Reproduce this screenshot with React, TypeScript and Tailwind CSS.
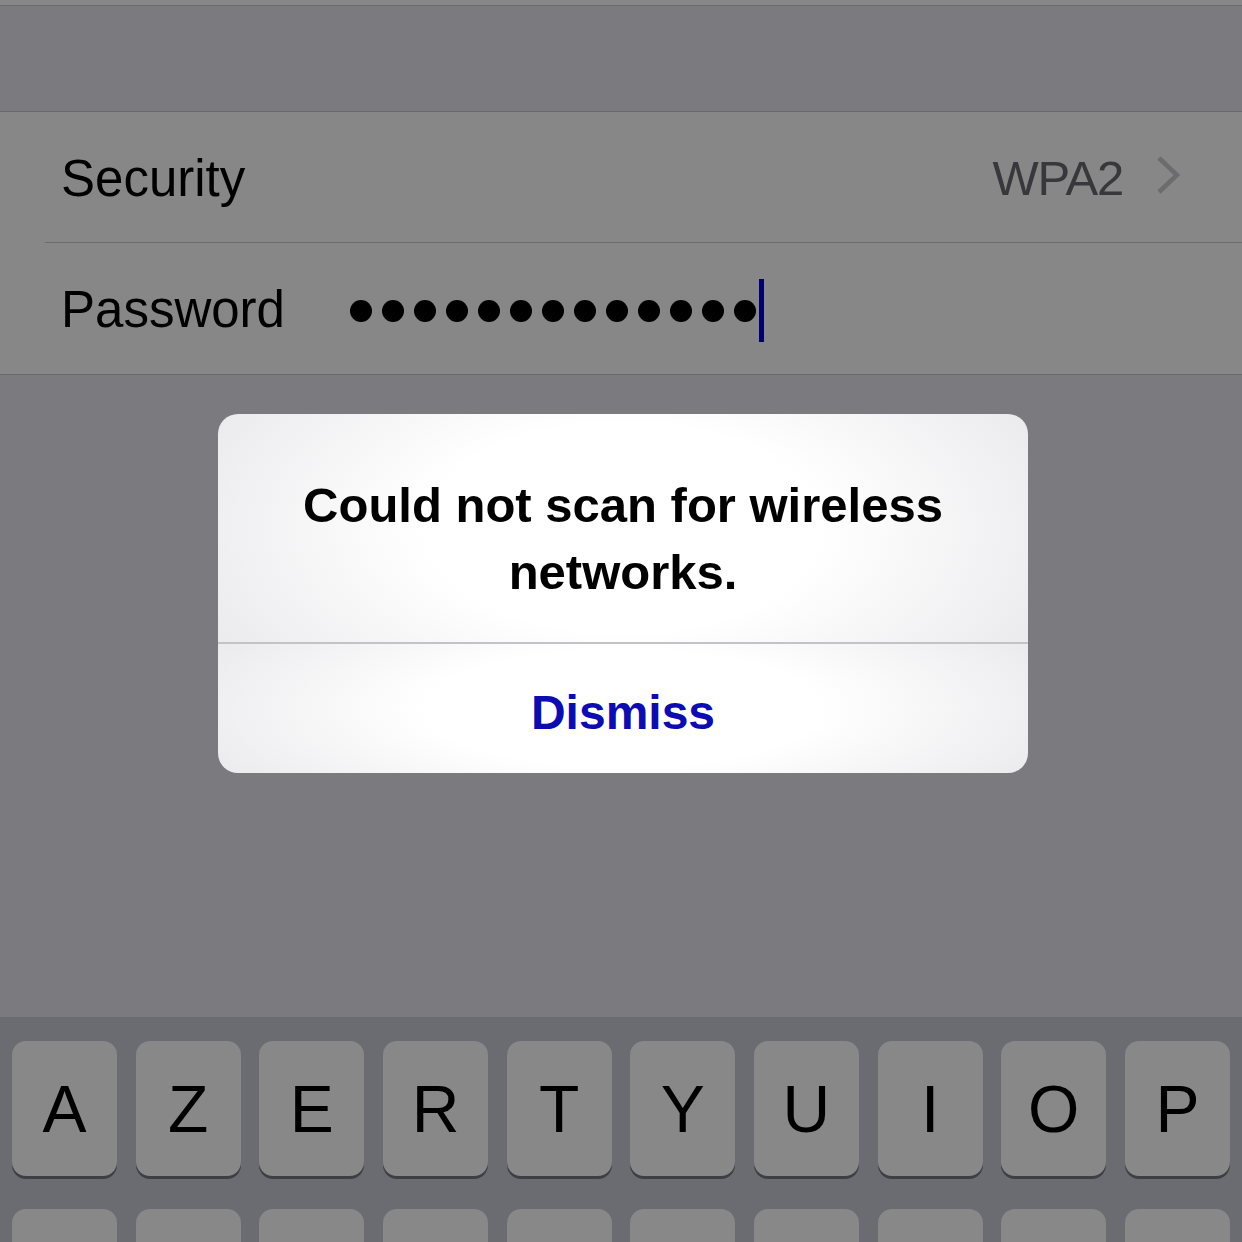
const keys = ['A', 'Z', 'E', 'R', 'T', 'Y', 'U', 'I', 'O', 'P']
const font = { fontFamily: '"Liberation Sans", Arial, sans-serif' }

function Key({ label }: { label: string }) {
  return (
    <div className="w-[105px] h-[135px] rounded-[14px] bg-[#888888] shadow-[0_3px_0_#3e3f43] flex items-center justify-center text-[66px] text-black leading-none">
      {label}
    </div>
  )
}

export default function App() {
  return (
    <div className="w-[1242px] h-[1242px] overflow-hidden bg-[#7b7a7f] flex flex-col" style={font}>
      <div className="h-[6px] bg-[#878689] border-b border-[#6c6b70]" />
      <div className="h-[106px] border-b border-[#69686d]" />

      <div className="bg-[#878787] border-b border-[#6a696e]">
        <div className="h-[130px] flex items-center pt-[4px] pl-[61px] pr-[60px]">
          <span className="text-[51px] text-black">Security</span>
          <span className="ml-auto text-[49px] text-[#38383c] tracking-[-1.2px]">WPA2</span>
          <svg width="26" height="40" viewBox="0 0 26 40" className="ml-[33px] mt-[-6px]">
            <path d="M3 2 L21 19 L3 36" fill="none" stroke="#6c6c70" strokeWidth="4.5" />
          </svg>
        </div>
        <div className="ml-[45px] h-px bg-[#6c6b70]" />
        <div className="h-[131px] flex items-center pt-[4px] pl-[61px]">
          <span className="text-[51px] text-black">Password</span>
          <div className="ml-[65px] flex items-center gap-[10px]">
            {Array.from({ length: 13 }).map((_, i) => (
              <div key={i} className="w-[22px] h-[22px] rounded-full bg-black" />
            ))}
          </div>
          <div className="ml-[3px] w-[5px] h-[63px] bg-[#00006e]" />
        </div>
      </div>

      <div className="flex-1 flex justify-center pl-[4px]">
        <div className="mt-[39px] w-[810px] h-[359px] rounded-[20px] overflow-hidden flex flex-col">
          <div className="h-[228px] bg-[radial-gradient(70%_130%_at_50%_50%,#ffffff_35%,#e7e7ea_90%)] flex flex-col items-center justify-center pt-[22px] text-[49px] font-bold text-black leading-[67px] text-center">
            <span>Could not scan for wireless</span>
            <span>networks.</span>
          </div>
          <div className="h-[2px] bg-[#c3c3c7]" />
          <div className="flex-1 bg-[radial-gradient(70%_130%_at_50%_50%,#ffffff_35%,#e7e7ea_90%)] flex items-center justify-center pt-[8px] text-[48px] font-bold text-[#0c0cb2]">
            Dismiss
          </div>
        </div>
      </div>

      <div className="h-[225px] bg-[#6a6c71] pt-[24px] px-[12px] flex flex-col gap-[33px]">
        <div className="flex justify-between">
          {keys.map((k) => (
            <Key key={k} label={k} />
          ))}
        </div>
        <div className="flex justify-between">
          {keys.map((k) => (
            <Key key={k + '2'} label="" />
          ))}
        </div>
      </div>
    </div>
  )
}
